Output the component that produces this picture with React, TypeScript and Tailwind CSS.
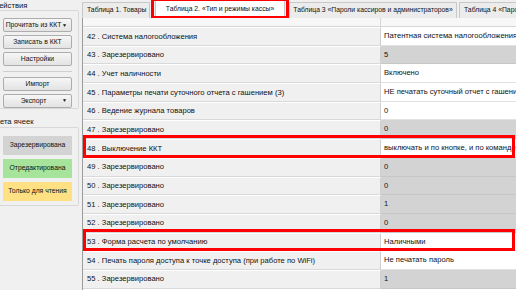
import React from "react"

const rows = [
  { n: 42, label: "Система налогообложения", value: "Патентная система налогообложения", reserved: false },
  { n: 43, label: "Зарезервировано", value: "5", reserved: true },
  { n: 44, label: "Учет наличности", value: "Включено", reserved: false },
  { n: 45, label: "Параметры печати суточного отчета с гашением (3)", value: "НЕ печатать суточный отчет с гашением", reserved: false },
  { n: 46, label: "Ведение журнала товаров", value: "0", reserved: false },
  { n: 47, label: "Зарезервировано", value: "0", reserved: true },
  { n: 48, label: "Выключение ККТ", value: "выключать и по кнопке, и по команде", reserved: false, mark: true },
  { n: 49, label: "Зарезервировано", value: "0", reserved: true },
  { n: 50, label: "Зарезервировано", value: "0", reserved: true },
  { n: 51, label: "Зарезервировано", value: "1", reserved: true },
  { n: 52, label: "Зарезервировано", value: "0", reserved: true },
  { n: 53, label: "Форма расчета по умолчанию", value: "Наличными", reserved: false, mark: true },
  { n: 54, label: "Печать пароля доступа к точке доступа (при работе по WiFi)", value: "Не печатать пароль", reserved: false },
  { n: 55, label: "Зарезервировано", value: "1", reserved: true },
]

function Btn({ children, arrow }: { children: React.ReactNode; arrow?: boolean }) {
  return (
    <div className="h-[15px] flex items-center justify-center relative border border-[#adadad] rounded-[2px] bg-gradient-to-b from-[#f6f6f6] to-[#e3e3e3] whitespace-nowrap">
      <span className={arrow ? "-ml-[8px]" : ""}>{children}</span>
      {arrow && <span className="absolute right-[4px] text-[5px]">▼</span>}
    </div>
  )
}

export default function App() {
  return (
    <div
      className="w-[516px] h-[290px] overflow-hidden bg-[#f0f0f0] flex text-[7.6px] leading-none text-[#111]"
      style={{ fontFamily: "'Liberation Sans', Arial, sans-serif" }}
    >
      {/* Left panel */}
      <div className="w-[82px] shrink-0 flex flex-col text-[6.8px]">
        <div className="h-[11px] flex items-center -ml-[6px] text-[7.6px]">Действия</div>
        <div className="w-[79px] h-[99px] -mt-[1px] border border-[#d8d8d8] border-l-0 rounded-r-[2px] pl-[3px] pr-[6px] pt-[7px] flex flex-col gap-[3px]">
          <Btn arrow>Прочитать из ККТ</Btn>
          <Btn>Записать в ККТ</Btn>
          <Btn>Настройки</Btn>
          <div className="h-px bg-[#cfcfcf] my-[2px]" />
          <Btn>Импорт</Btn>
          <Btn arrow>Экспорт</Btn>
        </div>
        <div className="h-[11px] mt-[7px] flex items-center -ml-[4px] text-[7.6px]">вета ячеек</div>
        <div className="w-[79px] h-[79px] border border-[#d8d8d8] border-l-0 rounded-r-[2px] pl-[3px] pr-[6px] pt-[8px] flex flex-col gap-[4px]">
          <div className="h-[19px] bg-[#d3d3d3] flex items-center justify-center">Зарезервирована</div>
          <div className="h-[19px] bg-[#a6e49b] flex items-center justify-center">Отредактирована</div>
          <div className="h-[19px] bg-[#ffe082] flex items-center justify-center">Только для чтения</div>
        </div>
      </div>

      {/* Right */}
      <div className="flex-1 flex flex-col min-w-0">
        {/* Tabs */}
        <div className="h-[18px] flex items-end shrink-0 overflow-hidden text-[6.8px]">
          <div className="shrink-0 h-[16px] w-[68px] px-[4px] flex items-center border border-[#c8c8c8] border-b-0 bg-[#ececec] whitespace-nowrap">Таблица 1. Товары</div>
          <div className="shrink-0 relative ml-[2px] h-[18px] w-[136px]">
            <div className="h-[18px] flex items-center justify-center bg-white border border-[#c8c8c8] border-b-0 whitespace-nowrap mx-[3px]">Таблица 2. «Тип и режимы кассы»</div>
            <div className="absolute -left-[1px] -top-[2px] -right-[1px] -bottom-[1px] border-[3px] border-[#f00]" />
          </div>
          <div className="shrink-0 h-[16px] ml-[1px] w-[168px] px-[4px] flex items-center justify-center border border-[#c8c8c8] border-b-0 bg-[#ececec] whitespace-nowrap">Таблица 3 «Пароли кассиров и администраторов»</div>
          <div className="shrink-0 h-[16px] ml-[2px] px-[4px] flex items-center border border-[#c8c8c8] border-b-0 bg-[#ececec] whitespace-nowrap">Таблица 4 «Пароли кассиров»</div>
        </div>

        {/* Table */}
        <div className="flex-1 border-l border-[#9c9c9c] bg-white">
          <div className="h-[9px] flex border-b border-[#d6d6d6]">
            <div className="w-[298px] bg-[#f7f7f7] border-r border-[#d6d6d6]" />
            <div className="flex-1 bg-[#f7f7f7]" />
          </div>
          {rows.map((r) => (
            <div key={r.n} className="h-[18.7px] flex relative">
              <div className="w-[298px] shrink-0 flex items-center pl-[4px] bg-[#f0f0f0] border-t border-white border-b border-b-[#d9d9d9] border-r border-r-[#d0d0d0] whitespace-nowrap">
                {r.n} . {r.label}
              </div>
              <div
                className={`flex-1 flex items-center pl-[3px] whitespace-nowrap overflow-hidden border-b ${
                  r.reserved ? "bg-[#d3d3d3] border-[#c7c7c7]" : "bg-white border-[#e2e2e2]"
                }`}
              >
                {r.value}
              </div>
              {r.mark && <div className="absolute left-0 -top-[4px] right-[1px] bottom-0 border-[3px] border-[#f00]" />}
            </div>
          ))}
        </div>
      </div>
    </div>
  )
}
